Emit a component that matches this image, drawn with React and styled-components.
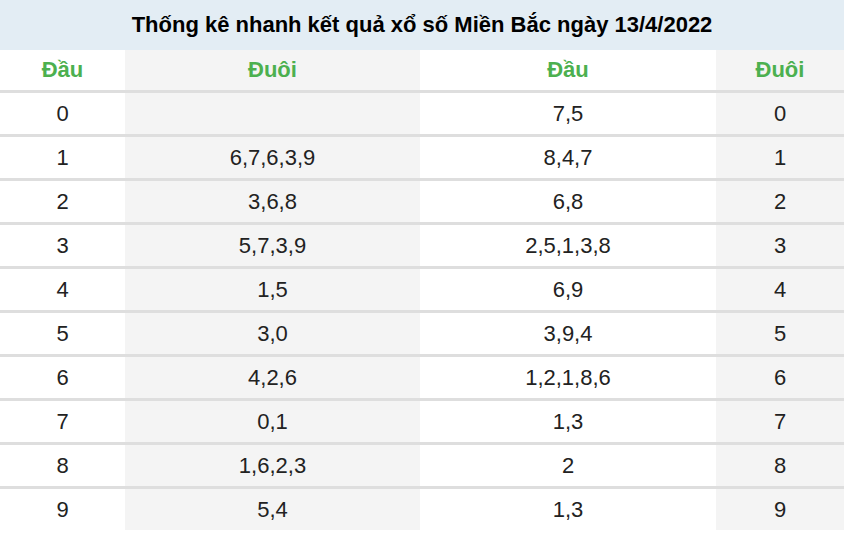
import React from "react";
import styled, { createGlobalStyle } from "styled-components";

const GlobalStyle = createGlobalStyle`
  body {
    margin: 0;
    background: #fff;
    font-family: "Liberation Sans", Arial, sans-serif;
  }
`;

const rows = [
  ["0", "", "7,5", "0"],
  ["1", "6,7,6,3,9", "8,4,7", "1"],
  ["2", "3,6,8", "6,8", "2"],
  ["3", "5,7,3,9", "2,5,1,3,8", "3"],
  ["4", "1,5", "6,9", "4"],
  ["5", "3,0", "3,9,4", "5"],
  ["6", "4,2,6", "1,2,1,8,6", "6"],
  ["7", "0,1", "1,3", "7"],
  ["8", "1,6,2,3", "2", "8"],
  ["9", "5,4", "1,3", "9"],
];

const widths = ["125px", "295px", "296px", "128px"];

export default function App() {
  return (
    <>
      <GlobalStyle />
      <Wrapper>
        <Title>Thống kê nhanh kết quả xổ số Miền Bắc ngày 13/4/2022</Title>
        <Table>
          <colgroup>
            {widths.map((w, i) => (
              <col key={i} style={{ width: w }} />
            ))}
          </colgroup>
          <thead>
            <tr>
              <HeadCell>Đầu</HeadCell>
              <HeadCell $shaded>Đuôi</HeadCell>
              <HeadCell>Đầu</HeadCell>
              <HeadCell $shaded>Đuôi</HeadCell>
            </tr>
          </thead>
          <tbody>
            {rows.map((r) => (
              <tr key={r[0]}>
                {r.map((v, i) => (
                  <Cell key={i} $shaded={i % 2 === 1}>
                    {v}
                  </Cell>
                ))}
              </tr>
            ))}
          </tbody>
        </Table>
      </Wrapper>
    </>
  );
}

const Wrapper = styled.div`
  width: 844px;
`;

const Title = styled.div`
  height: 50px;
  display: flex;
  align-items: center;
  justify-content: center;
  background: #e3edf4;
  color: #000;
  font-size: 22px;
  font-weight: bold;
`;

const Table = styled.table`
  width: 844px;
  border-collapse: collapse;
  table-layout: fixed;
`;

const HeadCell = styled.th`
  height: 40px;
  padding: 0;
  text-align: center;
  vertical-align: middle;
  color: #4cb04f;
  font-size: 22px;
  font-weight: bold;
  background: ${(p) => (p.$shaded ? "#f4f4f4" : "#fff")};
`;

const Cell = styled.td`
  height: 41px;
  padding: 0;
  text-align: center;
  vertical-align: middle;
  border-top: 3px solid #dedede;
  color: #222;
  font-size: 22px;
  background: ${(p) => (p.$shaded ? "#f4f4f4" : "#fff")};
`;
